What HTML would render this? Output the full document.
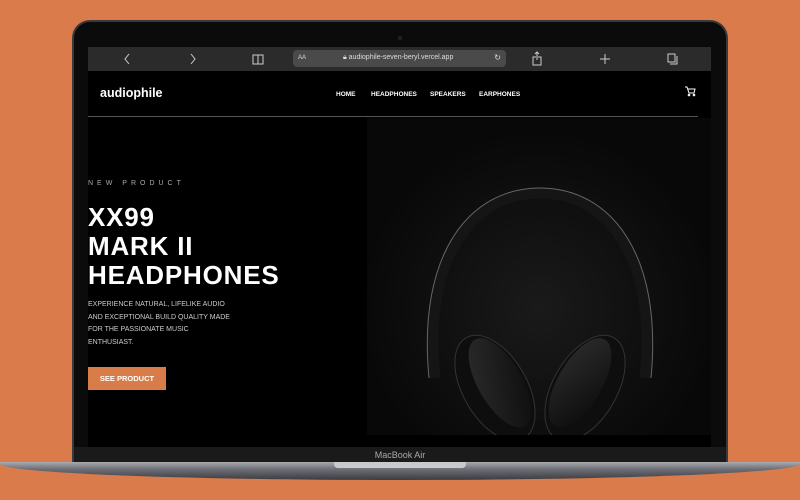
<!DOCTYPE html>
<html><head><style>
*{margin:0;padding:0;box-sizing:border-box}
body{width:800px;height:500px;background:#D97B4B;position:relative;overflow:hidden;font-family:"Liberation Sans",sans-serif}
.lid{position:absolute;left:72px;top:20px;width:656px;height:444px;background:#0b0b0b;border-radius:18px 18px 0 0;border:2px solid #3a3a3e;border-bottom:none}
.cam{position:absolute;left:398px;top:36px;width:4px;height:4px;border-radius:50%;background:#222}
.screen{position:absolute;left:88px;top:47px;width:623px;height:400px;background:#000;overflow:hidden}
.bar{position:absolute;left:0;top:0;width:623px;height:24px;background:#2b2b2b;color:#ccc}
.url{position:absolute;left:205px;top:3px;width:213px;height:17px;background:#4a4a4a;border-radius:4px;font-size:7px;color:#ddd}
.chin{position:absolute;left:74px;top:447px;width:652px;height:16px;background:#1a1a1a;color:#aaa;font-size:9px;text-align:center;line-height:16px}
.base{position:absolute;left:0;top:462px;width:800px;height:18px;background:linear-gradient(#a9aab0,#6e6f76 40%,#3b3c42);border-radius:0 0 50% 50%/0 0 90% 90%}
.notch{position:absolute;left:334px;top:462px;width:132px;height:6px;background:#c9c9ce;border-radius:0 0 4px 4px}
.nav a{position:absolute;top:44px;color:#fff;font-size:6.5px;font-weight:bold}
</style></head><body>
<div class="lid"></div><div class="cam"></div>
<div class="screen">
 <div class="bar">
  <svg width="623" height="24" style="position:absolute;left:0;top:0" stroke="#ccc" fill="none" stroke-width="1">
   <path d="M41 7l-4 5 4 5"/><path d="M103 7l4 5-4 5"/>
   <path d="M165 8h5v9h-5zM170 8h5v9h-5z"/>
   <path d="M448 10h-3v8h8v-8h-3M449 5v8M447 7l2-2 2 2"/>
   <path d="M517 7v10M512 12h10"/>
   <rect x="580" y="7" width="7" height="8"/><path d="M582 17h7v-8"/>
  </svg>
  <div class="url"><span style="position:absolute;left:5px;top:5px;font-size:6px">AA</span><span style="position:absolute;left:50px;top:4px">🔒︎ audiophile-seven-beryl.vercel.app</span><span style="position:absolute;right:5px;top:3px;font-size:8px">↻</span></div>
 </div>
 <div style="position:absolute;left:12px;top:39px;color:#fff;font-weight:bold;font-size:12.5px">audiophile</div>
 <div class="nav"><a style="left:248px">HOME</a><a style="left:283px">HEADPHONES</a><a style="left:342px">SPEAKERS</a><a style="left:391px">EARPHONES</a></div>
 <svg style="position:absolute;left:596px;top:38px" width="12" height="12" fill="none" stroke="#fff" stroke-width="1"><path d="M1 2h2l2 6h5l1-4H4"/><circle cx="5" cy="10" r=".8"/><circle cx="10" cy="10" r=".8"/></svg>
 <div style="position:absolute;left:0;top:69px;width:610px;height:1px;background:#555"></div>
 <div style="position:absolute;left:279px;top:71px;width:344px;height:317px;background:radial-gradient(circle at 50% 60%,#1a1a1a,#080808 70%)">
  <svg width="344" height="317" viewBox="0 0 344 317">
   <defs><linearGradient id="g" x1="0" y1="0" x2="1" y2="1"><stop offset="0" stop-color="#3a3a3a"/><stop offset="1" stop-color="#0a0a0a"/></linearGradient></defs>
   <path d="M68 260 C55 140 105 75 173 75 C241 75 291 140 278 260" fill="none" stroke="#151515" stroke-width="11"/>
   <path d="M62 260 C50 135 103 70 173 70 C243 70 296 135 284 260" fill="none" stroke="#666" stroke-width="1"/>
   <g transform="rotate(-30 128 270)"><ellipse cx="128" cy="270" rx="32" ry="58" fill="#0e0e0e" stroke="#333"/><ellipse cx="135" cy="268" rx="22" ry="50" fill="url(#g)" opacity=".7"/></g>
   <g transform="rotate(30 218 270)"><ellipse cx="218" cy="270" rx="32" ry="58" fill="#0e0e0e" stroke="#333"/><ellipse cx="211" cy="268" rx="22" ry="50" fill="url(#g)" opacity=".7"/></g>
  </svg>
 </div>
 <div style="position:absolute;left:0;top:388px;width:623px;height:12px;background:#000"></div>
 <div style="position:absolute;left:0;top:133px;color:#aaa;font-size:7px;letter-spacing:4px">NEW PRODUCT</div>
 <div style="position:absolute;left:0;top:156px;color:#fff;font-size:26px;line-height:29px;font-weight:bold;letter-spacing:0.8px">XX99<br>MARK II<br>HEADPHONES</div>
 <div style="position:absolute;left:0;top:252px;color:#ccc;font-size:7px;line-height:12.5px">EXPERIENCE NATURAL, LIFELIKE AUDIO<br>AND EXCEPTIONAL BUILD QUALITY MADE<br>FOR THE PASSIONATE MUSIC<br>ENTHUSIAST.</div>
 <div style="position:absolute;left:0;top:320px;width:78px;height:23px;background:#D87D4A;color:#fff;font-size:7.5px;font-weight:bold;text-align:center;line-height:23px">SEE PRODUCT</div>
</div>
<div class="chin">MacBook Air</div>
<div class="base"></div><div class="notch"></div>
</body></html>
